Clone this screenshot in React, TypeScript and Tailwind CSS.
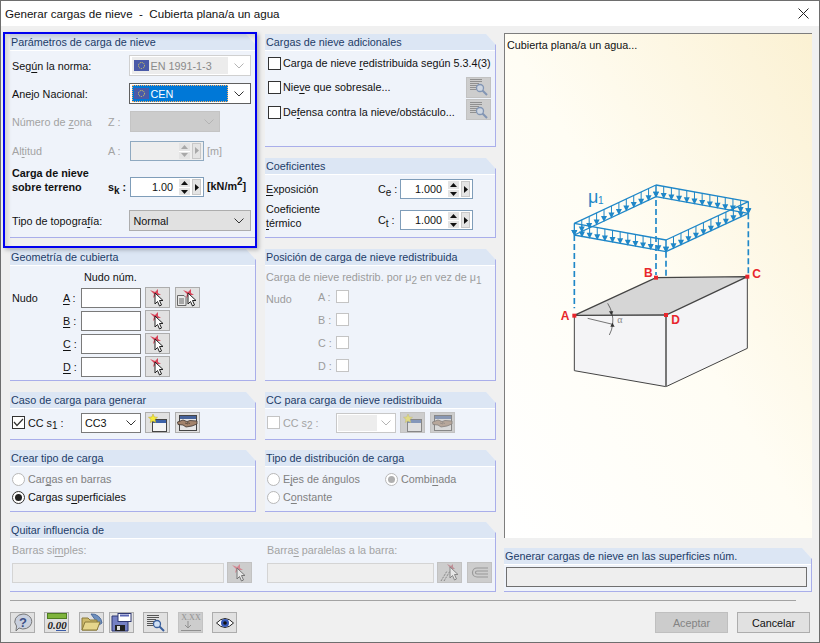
import type { ReactNode } from 'react'

function U({ children }: { children: ReactNode }) {
  return <span className="underline underline-offset-2">{children}</span>
}

function Sub({ children }: { children: ReactNode }) {
  return <sub className="text-[10px]">{children}</sub>
}

function Group({ title, className, children }: { title: string; className?: string; children?: ReactNode }) {
  return (
    <div className={`flex flex-col bg-[#eff3fa] border-r border-b border-[#a9aeea] [clip-path:polygon(0_0,calc(100%-10px)_0,100%_11px,100%_100%,0_100%)] ${className ?? ''}`}>
      <div className="h-[17px] shrink-0 bg-[#dce6f4] border-b border-white pl-[1px] leading-[16px] text-[#1d3c68]">{title}</div>
      {children}
    </div>
  )
}

function Chevron({ muted }: { muted?: boolean }) {
  return (
    <svg width="10" height="6" viewBox="0 0 10 6" className="shrink-0">
      <path d="M0.5 0.5 L5 5 L9.5 0.5" fill="none" stroke={muted ? '#b4b4b4' : '#333'} strokeWidth="1" />
    </svg>
  )
}

function Flag() {
  return (
    <svg width="15" height="11" viewBox="0 0 15 11" className="shrink-0">
      <rect width="15" height="11" fill="#4a5aa8" />
      <circle cx="7.5" cy="5.5" r="3" fill="none" stroke="#f0e050" strokeWidth="1" strokeDasharray="1 1" />
    </svg>
  )
}

function Check({ checked, muted }: { checked?: boolean; muted?: boolean }) {
  return (
    <span className={`w-[13px] h-[13px] shrink-0 flex items-center justify-center border ${muted ? 'border-[#c4c4c4] bg-white' : 'border-[#333] bg-white'}`}>
      {checked && (
        <svg width="11" height="9" viewBox="0 0 11 9">
          <path d="M1 4 L4 7.5 L10 1" fill="none" stroke="#333" strokeWidth="1.2" />
        </svg>
      )}
    </span>
  )
}

function Radio({ on, muted }: { on?: boolean; muted?: boolean }) {
  return (
    <span className={`w-[13px] h-[13px] shrink-0 rounded-full border flex items-center justify-center ${muted ? 'border-[#b8b8b8] bg-white' : 'border-[#333] bg-white'}`}>
      {on && <span className={`w-[7px] h-[7px] rounded-full ${muted ? 'bg-[#b0b0b0]' : 'bg-[#222]'}`} />}
    </span>
  )
}

function Spin({ value, muted, className }: { value?: string; muted?: boolean; className?: string }) {
  const c = muted ? '#a8a8a8' : '#111'
  return (
    <div className={`h-[20px] flex items-center border ${muted ? 'border-[#8fa9c0] bg-[#eeeeee]' : 'border-[#7f9db9] bg-white'} ${className ?? ''}`}>
      <span className="flex-1 text-right pr-[6px] text-[#111]">{value}</span>
      <div className="w-[11px] h-[16px] flex flex-col gap-[1px] bg-white">
        <span className="h-[8px] bg-[#e4e4e4] flex items-center justify-center">
          <svg width="7" height="4" viewBox="0 0 7 4"><path d="M3.5 0 L7 4 H0 Z" fill={c} /></svg>
        </span>
        <span className="h-[7px] bg-[#e4e4e4] flex items-center justify-center">
          <svg width="7" height="4" viewBox="0 0 7 4"><path d="M0 0 H7 L3.5 4 Z" fill={c} /></svg>
        </span>
      </div>
      <span className="w-[9px] h-[16px] ml-[2px] mr-[2px] bg-[#e4e4e4] border border-[#c8c8c8] flex items-center justify-center">
        <svg width="4" height="7" viewBox="0 0 4 7"><path d="M0 0 L4 3.5 L0 7 Z" fill={c} /></svg>
      </span>
    </div>
  )
}

function Btn({ children, off, className }: { children?: ReactNode; off?: boolean; className?: string }) {
  return (
    <span className={`w-[25px] h-[21px] shrink-0 border flex items-center justify-center ${off ? 'bg-[#cdcdcd] border-[#c2c2c2]' : 'bg-[#e1e1e1] border-[#adadad]'} ${className ?? ''}`}>
      <span className={off ? 'flex opacity-50' : 'flex'}>{children}</span>
    </span>
  )
}

function Pin() {
  return (
    <svg width="17" height="19" viewBox="0 0 17 19">
      <path d="M1 2 L6 4 L9 1 L9 5 L12 7 L7 7 L4 10 L5 6 Z" fill="#d9455a" />
      <path d="M6 5 L6 16 L8.5 13.5 L10.5 18 L12.5 17 L10.5 12.5 L14 12.5 Z" fill="#fff" stroke="#222" strokeWidth="1" />
    </svg>
  )
}

function PinDoc() {
  return (
    <svg width="21" height="19" viewBox="0 0 21 19">
      <path d="M0.5 7.5 H7 L9 9.5 V17.5 H0.5 Z" fill="#e8e8e8" stroke="#666" />
      <path d="M2 11 H7 M2 13 H7 M2 15 H7" stroke="#666" />
      <path d="M6 2 L11 4 L14 1 L14 5 L17 7 L12 7 L9 10 L10 6 Z" fill="#d9455a" />
      <path d="M11 5 L11 16 L13.5 13.5 L15.5 18 L17.5 17 L15.5 12.5 L19 12.5 Z" fill="#fff" stroke="#222" strokeWidth="1" />
    </svg>
  )
}

function Lens() {
  return (
    <svg width="19" height="18" viewBox="0 0 19 18">
      <path d="M1 1.5 H13 M1 3.5 H13 M1 5.5 H10 M1 7.5 H8 M1 9.5 H8 M1 11.5 H8" stroke="#555" />
      <circle cx="11" cy="10" r="3.5" fill="#cfe0f5" stroke="#3a5f9c" strokeWidth="1.3" />
      <path d="M13.5 12.5 L18 17" stroke="#3a5f9c" strokeWidth="2" />
    </svg>
  )
}

function NewCase() {
  return (
    <svg width="19" height="18" viewBox="0 0 19 18">
      <rect x="4.5" y="5.5" width="14" height="12" fill="#f4f4f4" stroke="#444" />
      <rect x="5" y="6" width="13" height="3" fill="#3d62a8" />
      <path d="M5 0 L6.3 3 L9.5 3.3 L7 5.4 L7.8 8.6 L5 6.9 L2.2 8.6 L3 5.4 L0.5 3.3 L3.7 3 Z" fill="#f5ea3c" stroke="#b9a823" strokeWidth="0.5" />
    </svg>
  )
}

function Hands() {
  return (
    <svg width="21" height="16" viewBox="0 0 21 16">
      <rect x="2.5" y="0.5" width="17" height="15" fill="#e6e6e6" stroke="#444" />
      <rect x="3" y="1" width="16" height="3" fill="#46639b" />
      <path d="M0.5 7 L6 5 L10 6.5 L13 5.5 L20 6 L20 9 L15 11 L9 12 L6 10 L1 9.5 Z" fill="#a3836b" stroke="#3d3530" strokeWidth="0.8" />
      <path d="M8 8 L11 9 M10 7.5 L13 8.5" stroke="#3d3530" strokeWidth="0.6" />
    </svg>
  )
}

function MultiPin() {
  return (
    <svg width="19" height="19" viewBox="0 0 19 19">
      <path d="M1 18 L7 8 M4 18 L10 8" stroke="#444" strokeDasharray="2 1" />
      <path d="M7 1 L11 3 L13 1 L13 4 L15 6 L11 6 Z" fill="#b05060" />
      <path d="M10 4 L10 15 L12.5 12.5 L14.5 17 L16.5 16 L14.5 11.5 L18 11.5 Z" fill="#fff" stroke="#444" />
    </svg>
  )
}

function Magnet() {
  return (
    <svg width="19" height="13" viewBox="0 0 19 13">
      <path d="M18 2 H7 A4.5 4.5 0 0 0 7 11 H18 M18 5 H7 A1.5 1.5 0 0 0 7 8 H18" fill="none" stroke="#666" strokeWidth="1.2" />
    </svg>
  )
}

function Help() {
  return (
    <svg width="20" height="19" viewBox="0 0 20 19">
      <path d="M10 1 A8.5 7.5 0 1 1 6 15 L3 18 L3.5 13 A8.5 7.5 0 0 1 10 1 Z" fill="#c9d0de" stroke="#777" />
      <text x="10" y="13.5" textAnchor="middle" fontSize="13" fontWeight="700" fontFamily="Liberation Sans, sans-serif" fill="#3c4f86">?</text>
    </svg>
  )
}

function Zero() {
  return (
    <svg width="20" height="19" viewBox="0 0 20 19">
      <rect x="0.5" y="0.5" width="19" height="5" fill="#7fb43c" stroke="#4f7d22" />
      <text x="10" y="16" textAnchor="middle" fontSize="11" fontStyle="italic" fontWeight="700" fontFamily="Liberation Serif, serif" fill="#222">0.00</text>
      <path d="M9 17.5 H19" stroke="#3b5ca8" />
    </svg>
  )
}

function Folder() {
  return (
    <svg width="22" height="19" viewBox="0 0 22 19">
      <path d="M10 1 A10 10 0 0 1 21 10 L18 12 Z" fill="#6d8fbe" stroke="#4d6c9c" />
      <path d="M1 5 H7 L9 7 H16 V17 H1 Z" fill="#cdb96a" stroke="#8a7a3a" />
      <path d="M1 17 L4 9 H19 L16 17 Z" fill="#e6d68c" stroke="#8a7a3a" />
    </svg>
  )
}

function Floppy() {
  return (
    <svg width="21" height="19" viewBox="0 0 21 19">
      <path d="M1 3 H17 L17 18 H1 Z" fill="#7580c4" stroke="#2f3873" />
      <rect x="7" y="0.5" width="13" height="8" fill="#fff" stroke="#2f3873" />
      <rect x="9" y="1.5" width="9" height="2" fill="#5b66b5" />
      <rect x="4" y="12" width="10" height="6" fill="#222" />
      <rect x="6" y="13" width="3" height="4" fill="#ddd" />
    </svg>
  )
}

function Xxx() {
  return (
    <svg width="22" height="19" viewBox="0 0 22 19">
      <text x="11" y="7" textAnchor="middle" fontSize="8" fontFamily="Liberation Serif, serif" fill="#555">X.XX</text>
      <path d="M8 8 V15 M5 12 L8 15 L11 12 M1 17.5 H21" fill="none" stroke="#555" />
    </svg>
  )
}

function Eye() {
  return (
    <svg width="18" height="12" viewBox="0 0 18 12">
      <path d="M0.5 6 Q9 -3 17.5 6 Q9 15 0.5 6 Z" fill="#fff" stroke="#222" />
      <circle cx="9" cy="6" r="4" fill="#3557b5" />
      <circle cx="9" cy="6" r="1.8" fill="#111" />
    </svg>
  )
}

const lerp = (a: number[], b: number[], t: number) => [a[0] + (b[0] - a[0]) * t, a[1] + (b[1] - a[1]) * t]

function Load({ from, to, n }: { from: number[]; to: number[]; n: number }) {
  const pts = Array.from({ length: n }, (_, i) => lerp(from, to, i / (n - 1)))
  return (
    <>
      <path d={`M${from[0]} ${from[1]} L${to[0]} ${to[1]} M${from[0]} ${from[1] + 35} L${to[0]} ${to[1] + 35}`} stroke="#1f87c8" strokeWidth="4" fill="none" />
      {pts.map((p, i) => (
        <g key={i}>
          <path d={`M${p[0]} ${p[1]} V${p[1] + 24}`} stroke="#1f87c8" strokeWidth="3" />
          <path d={`M${p[0] - 9} ${p[1] + 20} H${p[0] + 9} L${p[0]} ${p[1] + 38} Z`} fill="#1f87c8" />
        </g>
      ))}
    </>
  )
}

function Diagram() {
  const p1 = [103, 160]
  const p2 = [348, 45]
  const p3 = [625, 95]
  const p4 = [378, 210]
  return (
    <svg width="240" height="240" viewBox="0 0 720 720" className="block" fontFamily="Liberation Sans, sans-serif">
      <Load from={p2} to={p3} n={13} />
      <Load from={p1} to={p2} n={12} />
      <Load from={p1} to={p4} n={13} />
      <Load from={p4} to={p3} n={12} />
      <path d="M103 195 V415 M348 90 V315 M378 245 V425 M625 130 V315" stroke="#1f87c8" strokeWidth="5" strokeDasharray="18 9" fill="none" />
      <text x="144" y="100" fontSize="54" fill="#1f87c8">μ</text>
      <text x="174" y="102" fontSize="30" fill="#1f87c8">1</text>
      <path d="M103 436 L348 323 L622 320 L378 435 Z" fill="#d6d6d6" />
      <path d="M103 436 L378 435 L378 650 L103 602 Z" fill="#f4f4f6" />
      <path d="M378 435 L622 320 L622 535 L378 650 Z" fill="#f4f4f6" />
      <path d="M103 436 L348 323 L622 320 L378 435 Z" fill="none" stroke="#444" strokeWidth="4" />
      <path d="M103 436 V602 L378 650 L622 535 V320" fill="none" stroke="#444" strokeWidth="3" />
      <path d="M378 435 V650" stroke="#777" strokeWidth="6" />
      <path d="M143 445 L218 463" stroke="#333" strokeWidth="2" />
      <path d="M203 400 Q222 430 218 463 Q216 480 208 495" fill="none" stroke="#333" strokeWidth="2" />
      <path d="M207 424 L220 424 L214 436 Z M211 470 L224 470 L217 458 Z" fill="#333" />
      <text x="232" y="458" fontSize="30" fill="#888" fontFamily="Liberation Serif, serif">α</text>
      <rect x="97" y="431" width="12" height="12" fill="#e8262c" />
      <rect x="342" y="317" width="12" height="12" fill="#e8262c" />
      <rect x="616" y="314" width="12" height="12" fill="#e8262c" />
      <rect x="372" y="429" width="12" height="12" fill="#e8262c" />
      <g fontSize="36" fontWeight="700" fill="#e8262c">
        <text x="62" y="450">A</text>
        <text x="312" y="320">B</text>
        <text x="637" y="324">C</text>
        <text x="394" y="461">D</text>
      </g>
    </svg>
  )
}

function NodeRow({ label, extra }: { label: string; extra?: boolean }) {
  return (
    <div className="flex items-center h-[21px]">
      <span className="w-[18px]"><U>{label}</U> :</span>
      <span className="w-[60px] h-[20px] bg-white border border-[#7a7a7a]" />
      <Btn className="ml-[4px]"><Pin /></Btn>
      {extra && <Btn className="ml-[5px]"><PinDoc /></Btn>}
    </div>
  )
}

function MutedNode({ label }: { label: string }) {
  return (
    <div className="flex items-center h-[23px]">
      <span className="w-[18px]">{label} :</span>
      <Check muted />
    </div>
  )
}

export default function App() {
  return (
    <div className="relative w-[820px] h-[643px] overflow-hidden bg-[#f0f0f0] border border-[#6e6e6e] text-[10.8px] leading-[14px] text-[#111] font-['Liberation_Sans',sans-serif]">
      <div className="h-[25px] bg-white flex items-center justify-between pl-[4px] pr-[10px] text-[11.6px]">
        <span className="whitespace-pre">Generar cargas de nieve  -  Cubierta plana/a un agua</span>
        <svg width="11" height="11" viewBox="0 0 11 11"><path d="M0.5 0.5 L10.5 10.5 M10.5 0.5 L0.5 10.5" stroke="#222" /></svg>
      </div>

      <div className="flex gap-[8px] pl-[9px] pt-[8px]">
        <div className="w-[486px] flex flex-col">
          <div className="flex gap-[9px] h-[204px]">
            <Group title="Parámetros de carga de nieve" className="w-[246px]">
              <div className="flex flex-col pl-[2px] pt-[4px] pr-[4px]">
                <div className="flex items-center h-[21px]">
                  <span className="w-[118px]">Seg<U>ú</U>n la norma:</span>
                  <div className="w-[122px] h-[21px] bg-white border border-[#d0d0d0] flex items-center pl-[2px] pr-[6px]">
                    <span className="flex-1 h-[17px] bg-[#ececec] flex items-center gap-[1px] pl-[2px] text-[#8a8a8a]"><Flag />EN 1991-1-3</span>
                    <span className="ml-[6px]"><Chevron muted /></span>
                  </div>
                </div>
                <div className="flex items-center h-[21px] mt-[7px]">
                  <span className="w-[118px]">Anejo Nacional:</span>
                  <div className="w-[122px] h-[21px] bg-white border border-[#5f5f5f] flex items-center pl-[2px] pr-[6px]">
                    <span className="flex-1 h-[17px] bg-[#0078d7] border border-dotted border-[#ffb060] flex items-center gap-[1px] pl-[1px] text-white"><Flag />CEN</span>
                    <span className="ml-[6px]"><Chevron /></span>
                  </div>
                </div>
                <div className="flex items-center h-[21px] mt-[7px] text-[#a3a3a3]">
                  <span className="w-[96px]">Número de <U>z</U>ona</span>
                  <span className="w-[22px]">Z :</span>
                  <div className="w-[90px] h-[21px] bg-[#cccccc] border border-[#c4c4c4] flex items-center justify-end pr-[5px]"><Chevron muted /></div>
                </div>
                <div className="flex items-center h-[21px] mt-[8px] text-[#a3a3a3]">
                  <span className="w-[96px]">Al<U>t</U>itud</span>
                  <span className="w-[22px]">A :</span>
                  <Spin muted className="w-[74px]" />
                  <span className="ml-[3px]">[m]</span>
                </div>
                <div className="flex h-[31px] mt-[5px]">
                  <span className="w-[96px] font-bold leading-[14px]">Carga de nieve<br />sobre terreno</span>
                  <span className="w-[22px] font-bold pt-[14px]">s<Sub>k</Sub> :</span>
                  <div className="mt-[11px] flex items-start">
                    <Spin value="1.00" className="w-[74px]" />
                    <span className="ml-[3px] mt-[2px] font-bold whitespace-nowrap">[kN/m<sup className="text-[10px]">2</sup>]</span>
                  </div>
                </div>
                <div className="flex items-center h-[21px] mt-[13px]">
                  <span className="w-[118px]">Tipo de topogra<U>f</U>ía:</span>
                  <div className="w-[122px] h-[21px] bg-[#e1e1e1] border border-[#adadad] flex items-center justify-between pl-[3px] pr-[6px]">Normal<Chevron /></div>
                </div>
              </div>
            </Group>
            <div className="w-[231px] flex flex-col gap-[11px]">
              <Group title="Cargas de nieve adicionales" className="h-[113px]">
                <div className="flex flex-col pl-[3px] pr-[4px]">
                  <div className="flex items-center h-[24px]"><Check /><span className="ml-[2px] whitespace-nowrap">Carga de nieve <U>r</U>edistribuida según 5.3.4(3)</span></div>
                  <div className="flex items-center h-[24px]"><Check /><span className="flex-1 ml-[2px]">Nie<U>v</U>e que sobresale...</span><Btn off><Lens /></Btn></div>
                  <div className="flex items-center h-[24px] mt-[1px]"><Check /><span className="flex-1 ml-[2px]">De<U>f</U>ensa contra la nieve/obstáculo...</span><Btn off className="-mt-[5px]"><Lens /></Btn></div>
                </div>
              </Group>
              <Group title="Coeficientes" className="h-[80px]">
                <div className="flex flex-col pl-[1px] pt-[4px]">
                  <div className="flex items-center h-[20px]">
                    <span className="w-[112px]"><U>E</U>xposición</span>
                    <span className="w-[22px]">C<Sub>e</Sub> :</span>
                    <Spin value="1.000" className="w-[73px]" />
                  </div>
                  <div className="flex items-center h-[28px] mt-[3px]">
                    <span className="w-[112px]">Coeficiente<br /><U>t</U>érmico</span>
                    <span className="w-[22px] pt-[8px]">C<Sub>t</Sub> :</span>
                    <Spin value="1.000" className="w-[73px] mt-[8px]" />
                  </div>
                </div>
              </Group>
            </div>
          </div>

          <div className="flex gap-[9px] mt-[11px]">
            <Group title="Geometría de cubierta" className="w-[246px] h-[132px]">
              <div className="flex pl-[2px] pt-[4px]">
                <div className="w-[51px] pt-[21px]">Nudo</div>
                <div className="flex flex-col">
                  <div className="pl-[21px] h-[14px] mb-[3px]">Nudo núm.</div>
                  <div className="flex flex-col gap-[2px]">
                    <NodeRow label="A" extra />
                    <NodeRow label="B" />
                    <NodeRow label="C" />
                    <NodeRow label="D" />
                  </div>
                </div>
              </div>
            </Group>
            <Group title="Posición de carga de nieve redistribuida" className="w-[231px] h-[132px]">
              <div className="flex flex-col pl-[1px] pt-[4px] text-[#9c9c9c]">
                <div className="h-[15px] whitespace-nowrap">Carga de nieve redistrib. por μ<Sub>2</Sub> en vez de μ<Sub>1</Sub></div>
                <div className="flex">
                  <div className="w-[52px] pt-[7px]">Nudo</div>
                  <div className="flex flex-col">
                    <MutedNode label="A" />
                    <MutedNode label="B" />
                    <MutedNode label="C" />
                    <MutedNode label="D" />
                  </div>
                </div>
              </div>
            </Group>
          </div>

          <div className="flex gap-[9px] mt-[11px]">
            <Group title="Caso de carga para generar" className="w-[246px] h-[48px]">
              <div className="flex items-center pl-[2px] pt-[3px]">
                <Check checked />
                <span className="w-[53px] ml-[3px]">CC s<Sub>1</Sub> :</span>
                <div className="w-[60px] h-[20px] bg-white border border-[#7a7a7a] flex items-center justify-between pl-[3px] pr-[4px]">CC3<Chevron /></div>
                <Btn className="ml-[4px]"><NewCase /></Btn>
                <Btn className="ml-[5px]"><Hands /></Btn>
              </div>
            </Group>
            <Group title="CC para carga de nieve redistribuida" className="w-[231px] h-[48px]">
              <div className="flex items-center pl-[2px] pt-[3px] text-[#a3a3a3]">
                <Check muted />
                <span className="w-[53px] ml-[3px]">CC s<Sub>2</Sub> :</span>
                <div className="w-[60px] h-[20px] bg-white border border-[#c8c8c8] flex items-center pl-[1px] pr-[4px]">
                  <span className="w-[40px] h-[16px] bg-[#ededed]" />
                  <span className="ml-[4px]"><Chevron muted /></span>
                </div>
                <Btn off className="ml-[4px]"><NewCase /></Btn>
                <Btn off className="ml-[5px]"><Hands /></Btn>
              </div>
            </Group>
          </div>

          <div className="flex gap-[9px] mt-[10px]">
            <Group title="Crear tipo de carga" className="w-[246px] h-[62px]">
              <div className="flex flex-col pl-[2px] pt-[3px]">
                <div className="flex items-center h-[18px] text-[#808080]"><Radio muted /><span className="ml-[3px]">Car<U>g</U>as en barras</span></div>
                <div className="flex items-center h-[18px]"><Radio on /><span className="ml-[3px]">Cargas s<U>u</U>perficiales</span></div>
              </div>
            </Group>
            <Group title="Tipo de distribución de carga" className="w-[231px] h-[62px]">
              <div className="flex flex-col pl-[2px] pt-[3px] text-[#808080]">
                <div className="flex items-center h-[18px]">
                  <Radio muted /><span className="w-[102px] ml-[3px]">E<U>j</U>es de ángulos</span>
                  <Radio muted on /><span className="ml-[3px]">Combi<U>n</U>ada</span>
                </div>
                <div className="flex items-center h-[18px]"><Radio muted /><span className="ml-[3px]">C<U>o</U>nstante</span></div>
              </div>
            </Group>
          </div>

          <Group title="Quitar influencia de" className="w-[486px] h-[70px] mt-[10px]">
            <div className="flex gap-[15px] pl-[2px] pt-[4px] text-[#a3a3a3]">
              <div className="w-[240px] flex flex-col">
                <div className="h-[19px] whitespace-nowrap">Barras si<U>m</U>ples:</div>
                <div className="flex items-center">
                  <span className="w-[212px] h-[20px] bg-[#eeeeee] border border-[#d4d4d4]" />
                  <Btn off className="ml-[3px]"><Pin /></Btn>
                </div>
              </div>
              <div className="flex flex-col">
                <div className="h-[19px] whitespace-nowrap">Barra<U>s</U> paralelas a la barra:</div>
                <div className="flex items-center">
                  <span className="w-[167px] h-[20px] bg-[#eeeeee] border border-[#d4d4d4]" />
                  <Btn off className="ml-[3px]"><MultiPin /></Btn>
                  <Btn off className="ml-[5px]"><Magnet /></Btn>
                </div>
              </div>
            </div>
          </Group>
        </div>

        <div className="w-[308px] flex flex-col -mt-px">
          <div className="h-[505px] border-l border-t border-[#7d7d7d] bg-linear-to-tr from-white via-[#fffdf4] to-[#fbf1d3] pl-[2px] pt-[4px]">
            <div className="h-[14px]">Cubierta plana/a un agua...</div>
            <div className="ml-[33px] mt-[118px]"><Diagram /></div>
          </div>
          <Group title="Generar cargas de nieve en las superficies núm." className="h-[44px] mt-[10px]">
            <div className="pl-[2px] pr-[4px] pt-[2px]">
              <div className="h-[20px] bg-[#eeeeee] border border-[#6f6f6f]" />
            </div>
          </Group>
        </div>
      </div>

      <div className="h-px w-[786px] ml-[9px] mt-[8px] bg-[#a3a3a3]" />

      <div className="flex items-center justify-between pl-[9px] pr-[9px] mt-[11px]">
        <div className="flex">
          <Btn><Help /></Btn>
          <Btn className="ml-[9px]"><Zero /></Btn>
          <Btn className="ml-[10px]"><Folder /></Btn>
          <Btn className="ml-[5px]"><Floppy /></Btn>
          <Btn className="ml-[9px]"><Lens /></Btn>
          <Btn off className="ml-[10px]"><Xxx /></Btn>
          <Btn className="ml-[9px]"><Eye /></Btn>
        </div>
        <div className="flex gap-[9px]">
          <span className="w-[73px] h-[21px] bg-[#cccccc] border border-[#bfbfbf] text-[#838383] flex items-center justify-center">Aceptar</span>
          <span className="w-[73px] h-[21px] bg-[#e1e1e1] border border-[#adadad] flex items-center justify-center">Cancelar</span>
        </div>
      </div>

      <div className="absolute left-[2px] top-[31px] w-[254px] h-[216px] border-2 border-[#0000f0] pointer-events-none shadow-[2px_2px_4px_rgba(0,0,0,0.25),inset_3px_3px_4px_rgba(0,0,0,0.12)]" />
    </div>
  )
}
